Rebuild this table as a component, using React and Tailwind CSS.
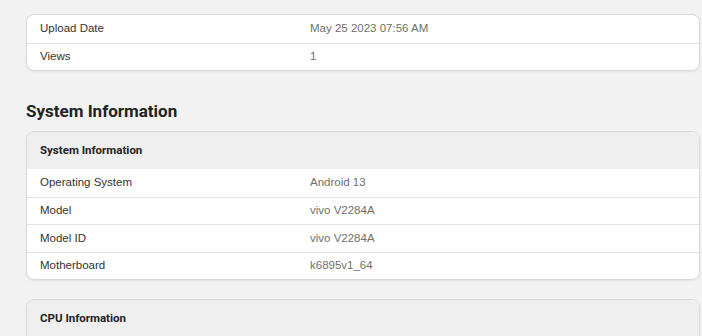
const uploadRows = [
  ["Upload Date", "May 25 2023 07:56 AM"],
  ["Views", "1"],
];

const systemRows = [
  ["Operating System", "Android 13"],
  ["Model", "vivo V2284A"],
  ["Model ID", "vivo V2284A"],
  ["Motherboard", "k6895v1_64"],
];

function Row({ label, value, first }) {
  return (
    <div
      className={`flex h-[27.5px] items-center px-[13px] ${
        first ? "" : "border-t border-[#e3e3e3]"
      }`}
    >
      <div className="w-[270px] text-[#333]">{label}</div>
      <div className="text-[#6f6f6f]">{value}</div>
    </div>
  );
}

function Card({ title, rows, className = "" }) {
  return (
    <div
      className={`overflow-hidden rounded-[8px] border border-[#d8d8d8] bg-white shadow-[0_1px_2px_rgba(0,0,0,0.06)] ${className}`}
    >
      {title && (
        <div className="flex h-[37px] items-center bg-[#efefef] px-[13px] font-['Roboto',sans-serif] text-[11.5px] font-bold text-[#222]">
          {title}
        </div>
      )}
      {rows.map(([label, value], i) => (
        <Row key={label} label={label} value={value} first={i === 0} />
      ))}
    </div>
  );
}

export default function App() {
  return (
    <div className="h-[336px] overflow-hidden bg-[#f2f2f2] pl-[26px] pt-[14px] font-['Liberation_Sans',Arial,sans-serif] text-[11.5px]">
      <div className="w-[674px]">
        <Card rows={uploadRows} />

        <h2 className="mt-[29px] mb-[9px] font-['Roboto',sans-serif] text-[17px] font-bold leading-[22px] text-[#222]">
          System Information
        </h2>

        <Card title="System Information" rows={systemRows} />

        <Card title="CPU Information" rows={[]} className="mt-[19px] h-[60px]" />
      </div>
    </div>
  );
}
